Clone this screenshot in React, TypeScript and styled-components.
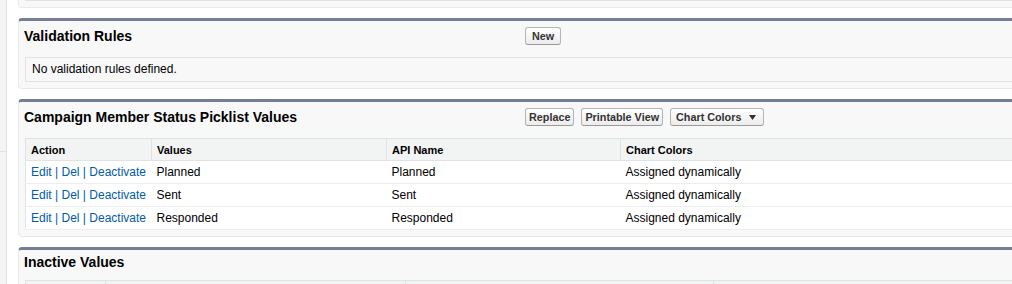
import React from "react";
import styled, { createGlobalStyle } from "styled-components";

const GlobalStyle = createGlobalStyle`
  html, body {
    margin: 0;
    padding: 0;
    background: #fff;
    overflow: hidden;
  }
  body {
    font-family: "Liberation Sans", Arial, sans-serif;
    font-size: 12px;
    color: #000;
  }
`;

const Page = styled.div`
  display: flex;
  align-items: stretch;
  height: 284px;
  overflow: hidden;
`;

const Sidebar = styled.div`
  width: 7px;
  flex: none;
  display: flex;
  flex-direction: column;
`;

const SideBlock = styled.div<{ $h?: number }>`
  background: #f4f4f4;
  border-right: 1px solid #e2e2e2;
  border-bottom: ${(p) => (p.$h ? "1px solid #e2e2e2" : "none")};
  height: ${(p) => (p.$h ? `${p.$h}px` : "auto")};
  flex: ${(p) => (p.$h ? "none" : "1")};
`;

const Content = styled.div`
  flex: none;
  width: 1040px;
  padding-left: 11px;
  display: flex;
  flex-direction: column;
  gap: 10px;
`;

const Panel = styled.div<{ $stub?: boolean }>`
  background: #f8f8f8;
  border: 1px solid #eaeaea;
  border-top: ${(p) => (p.$stub ? "none" : "3px solid #747e96")};
  border-radius: ${(p) => (p.$stub ? "0 0 4px 4px" : "4px")};
  padding: 0 6px 6px;
`;

const StubLine = styled.div`
  border-bottom: 1px solid #e0e3e5;
`;

const Header = styled.div<{ $compact?: boolean }>`
  display: grid;
  grid-template-columns: 501px auto;
  align-items: center;
  padding: ${(p) => (p.$compact ? "4px 0 10px" : "6px 0 12px")};
  min-height: ${(p) => (p.$compact ? "16px" : "18px")};
  margin-left: -1px;
`;

const Title = styled.h2`
  margin: 0;
  font-size: 14px;
  line-height: 16px;
  font-weight: bold;
  color: #000;
`;

const Buttons = styled.div`
  display: flex;
  gap: 7px;
  align-items: center;
`;

const Button = styled.button<{ $pad?: number; $menu?: boolean }>`
  font-family: "Liberation Sans", Arial, sans-serif;
  font-size: 10.8px;
  font-weight: bold;
  line-height: 12px;
  color: #333;
  padding: ${(p) => (p.$menu ? "2px 7px 2px 5px" : `2px ${p.$pad ?? 3}px`)};
  border: 1px solid #b5b5b5;
  border-bottom-color: #9a9a9a;
  border-radius: 3px;
  background: linear-gradient(#ffffff, #ececec);
  display: inline-flex;
  align-items: center;
  gap: 8px;
  cursor: pointer;
`;

const InnerBox = styled.div`
  border: 1px solid #e0e3e5;
  padding: 4px 6px;
  line-height: 15px;
  font-size: 12px;
`;

const Table = styled.table`
  width: 100%;
  border-collapse: collapse;
  table-layout: fixed;
  background: #fff;
  border: 1px solid #e0e3e5;
`;

const Th = styled.th`
  background: #f2f3f3;
  border: 1px solid #e0e3e5;
  border-top: none;
  text-align: left;
  font-size: 11px;
  font-weight: bold;
  height: 21px;
  padding: 0 5px;
  color: #000;
`;

const Td = styled.td`
  height: 22px;
  padding: 0 5px;
  font-size: 12px;
  border-bottom: 1px solid #ededed;
  color: #000;
  white-space: nowrap;
`;

const Action = styled.a`
  color: #015ba7;
  text-decoration: none;
`;

const Sep = styled.span`
  color: #015ba7;
`;

const Caret = () => (
  <svg width="7" height="5" viewBox="0 0 7 5">
    <path d="M0 0 H7 L3.5 5 Z" fill="#333" />
  </svg>
);

const values = ["Planned", "Sent", "Responded"];

export default function App() {
  return (
    <>
      <GlobalStyle />
      <Page>
        <Sidebar>
          <SideBlock $h={151} />
          <SideBlock />
        </Sidebar>
        <Content>
          <Panel $stub>
            <StubLine />
          </Panel>

          <Panel>
            <Header>
              <Title>Validation Rules</Title>
              <Buttons>
                <Button $pad={6}>New</Button>
              </Buttons>
            </Header>
            <InnerBox>No validation rules defined.</InnerBox>
          </Panel>

          <Panel>
            <Header>
              <Title>Campaign Member Status Picklist Values</Title>
              <Buttons>
                <Button>Replace</Button>
                <Button>Printable View</Button>
                <Button $menu>
                  Chart Colors <Caret />
                </Button>
              </Buttons>
            </Header>
            <Table>
              <colgroup>
                <col style={{ width: 126 }} />
                <col style={{ width: 235 }} />
                <col style={{ width: 234 }} />
                <col />
              </colgroup>
              <thead>
                <tr>
                  <Th>Action</Th>
                  <Th>Values</Th>
                  <Th>API Name</Th>
                  <Th>Chart Colors</Th>
                </tr>
              </thead>
              <tbody>
                {values.map((v) => (
                  <tr key={v}>
                    <Td>
                      <Action href="#">Edit</Action> <Sep>|</Sep>{" "}
                      <Action href="#">Del</Action> <Sep>|</Sep>{" "}
                      <Action href="#">Deactivate</Action>
                    </Td>
                    <Td>{v}</Td>
                    <Td>{v}</Td>
                    <Td>Assigned dynamically</Td>
                  </tr>
                ))}
              </tbody>
            </Table>
          </Panel>

          <Panel>
            <Header $compact>
              <Title>Inactive Values</Title>
            </Header>
            <Table>
              <colgroup>
                <col style={{ width: 80 }} />
                <col style={{ width: 300 }} />
                <col style={{ width: 308 }} />
                <col />
              </colgroup>
              <thead>
                <tr>
                  <Th />
                  <Th />
                  <Th />
                  <Th />
                </tr>
              </thead>
            </Table>
          </Panel>
        </Content>
      </Page>
    </>
  );
}
